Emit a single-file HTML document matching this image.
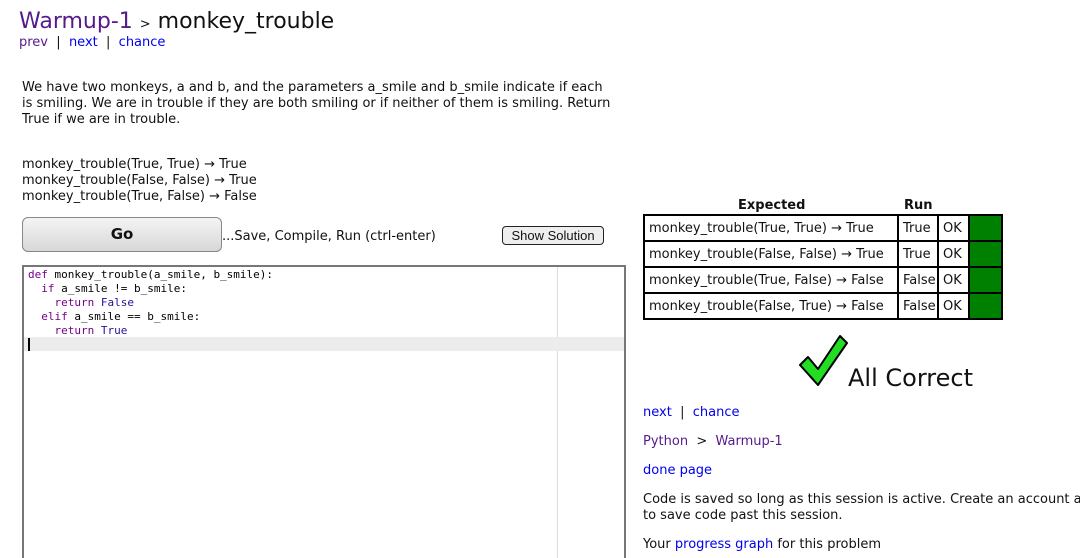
<!DOCTYPE html>
<html style="height:558px;overflow:hidden"><head><meta charset="utf-8"><style>
body{margin:0;width:1080px;height:558px;overflow:hidden;background:#fff;font-family:"DejaVu Sans","Liberation Sans",sans-serif;font-size:13px;color:#111;position:relative}
.a{position:absolute;white-space:nowrap}
.l{color:#0000ee}.v{color:#551a8b}
.code{font-family:"DejaVu Sans Mono","Liberation Mono",monospace;font-size:11px;line-height:14px}
table{border-collapse:collapse;table-layout:fixed;width:358px}
tr{height:26px}
td{border:2px solid #000;padding:0 0 0 4px;font-size:13px;white-space:nowrap;overflow:hidden}
</style></head><body>
<div class="a" style="left:19px;top:8px;font-size:22px;line-height:28px"><span class="v">Warmup-1</span> <span style="font-size:13px">&gt;</span> monkey_trouble</div>
<div class="a" style="left:19px;top:35px;line-height:16px"><span class="v">prev</span> &nbsp;|&nbsp; <span class="l">next</span> &nbsp;|&nbsp; <span class="l">chance</span></div>
<div class="a" style="left:22px;top:80px;line-height:16px">We have two monkeys, a and b, and the parameters a_smile and b_smile indicate if each<br>is smiling. We are in trouble if they are both smiling or if neither of them is smiling. Return<br>True if we are in trouble.</div>
<div class="a" style="left:22px;top:157px;line-height:16px">monkey_trouble(True, True) → True<br>monkey_trouble(False, False) → True<br>monkey_trouble(True, False) → False</div>
<div class="a" style="left:22px;top:217px;width:198px;height:33px;border:1px solid #888;border-radius:6px;background:linear-gradient(#f4f4f4,#d8d8d8);text-align:center;line-height:33px;font-weight:bold;font-size:15px">Go</div>
<div class="a" style="left:222px;top:229px">...Save, Compile, Run (ctrl-enter)</div>
<div class="a" style="left:502px;top:226px;width:100px;height:17px;border:1px solid #222;border-radius:4px;background:#eee;text-align:center;line-height:17px;font-family:'Liberation Sans',sans-serif;font-size:13px">Show Solution</div>
<div class="a" style="left:22px;top:265px;width:600px;height:300px;border:2px solid #777;border-bottom:none;overflow:hidden">
 <div style="position:absolute;left:533px;top:0;bottom:0;border-left:1px solid #ddd"></div>
 <div style="position:absolute;left:0;right:0;top:70px;height:14px;background:#ececec"></div>
 <div style="position:absolute;left:4px;top:71px;width:2px;height:13px;background:#000"></div>
 <div class="code" style="position:absolute;left:4px;top:1px;white-space:pre;color:#000"><span style="color:#708">def</span> monkey_trouble(a_smile, b_smile):
  <span style="color:#708">if</span> a_smile != b_smile:
    <span style="color:#708">return</span> <span style="color:#219">False</span>
  <span style="color:#708">elif</span> a_smile == b_smile:
    <span style="color:#708">return</span> <span style="color:#219">True</span></div>
</div>
<div class="a" style="left:738px;top:198px;font-weight:bold">Expected</div>
<div class="a" style="left:904px;top:198px;font-weight:bold">Run</div>
<table class="a" style="left:643px;top:214px">
<colgroup><col style="width:254px"><col style="width:40px"><col style="width:31px"><col style="width:33px"></colgroup>
<tr><td>monkey_trouble(True, True) → True</td><td>True</td><td>OK</td><td style="background:#008000"></td></tr>
<tr><td>monkey_trouble(False, False) → True</td><td>True</td><td>OK</td><td style="background:#008000"></td></tr>
<tr><td>monkey_trouble(True, False) → False</td><td>False</td><td>OK</td><td style="background:#008000"></td></tr>
<tr><td>monkey_trouble(False, True) → False</td><td>False</td><td>OK</td><td style="background:#008000"></td></tr>
</table>
<svg class="a" style="left:0;top:0" width="1080" height="558"><polygon points="800,365 808,357 818,369 840,336 847,343 818,385" fill="#22dd22" stroke="#000" stroke-width="2" stroke-linejoin="round"/></svg>
<div class="a" style="left:848px;top:363px;font-size:24px;line-height:30px">All Correct</div>
<div class="a" style="left:643px;top:405px"><span class="l">next</span> &nbsp;|&nbsp; <span class="l">chance</span></div>
<div class="a" style="left:643px;top:434px"><span class="v">Python</span> &nbsp;&gt;&nbsp; <span class="v">Warmup-1</span></div>
<div class="a" style="left:643px;top:463px" ><span class="l">done page</span></div>
<div class="a" style="left:643px;top:492px;line-height:16px">Code is saved so long as this session is active. Create an account a<br>to save code past this session.</div>
<div class="a" style="left:643px;top:537px">Your <span class="l">progress graph</span> for this problem</div>
</body></html>
